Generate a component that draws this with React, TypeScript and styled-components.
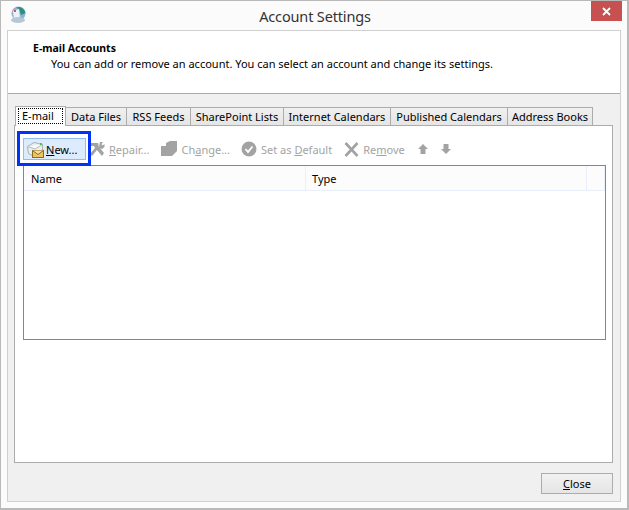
import React from "react";
import styled, { createGlobalStyle } from "styled-components";

const Global = createGlobalStyle`
  html, body { margin: 0; padding: 0; background: #fff; }
  * { box-sizing: border-box; }
`;
const Window = styled.div`
  width: 629px; height: 510px; background: #fbfbfb; border: 1px solid #b9b9b9; border-bottom-width: 2px;
  border-right-width: 2px;
  padding: 0 6px 6px 6px; display: flex; flex-direction: column;
  font-family: "Noto Sans", "DejaVu Sans", sans-serif; font-size: 11px; color: #000; overflow: hidden;
`;
const TitleBar = styled.div`
  height: 29px; flex: none; display: flex; align-items: flex-start; position: relative; justify-content: center;
`;
const AppIcon = styled.svg`
  position: absolute; left: 3px; top: 5px; width: 16px; height: 18px;
`;
const Title = styled.div`
  font-size: 14.5px; color: #333; line-height: 30px; letter-spacing: -0.15px; margin-left: 2px;
`;
const CloseX = styled.div`
  position: absolute; right: -1px; top: 0; width: 31px; height: 20px; background: #c75050;
  display: flex; align-items: center; justify-content: center;
`;
const Frame = styled.div`
  flex: 1; border: 1px solid #d0d0d0; display: flex; flex-direction: column; background: #f0f0f0; min-height: 0;
`;
const Header = styled.div`
  height: 63px; flex: none; background: #fff; border-bottom: 1px solid #aaa; padding: 10px 0 0 25px; 
`;
const HeaderTitle = styled.div`
  font-weight: 700; font-size: 10.5px; line-height: 15px; color: #000;
`;
const HeaderText = styled.div`
  margin: 0 0 0 18px; line-height: 16px; letter-spacing: 0; white-space: nowrap;
`;
const Body = styled.div`
  flex: 1; display: flex; flex-direction: column; padding: 13px 8px 0 6px; min-height: 0;
`;
const TabRow = styled.div`
  display: flex; height: 19px; flex: none; padding-left: 1px; position: relative; z-index: 1;
`;
const Tab = styled.div<{ $active?: boolean; $w: number }>`
  width: ${p => p.$w}px; height: ${p => (p.$active ? "20px" : "19px")}; flex: none; 
  margin-right: 0; margin-top: ${p => (p.$active ? "-1px" : "0")};
  border: 1px solid #acacac; margin-left: ${p => (p.$active ? "0" : "-1px")}; border-bottom: ${p => (p.$active ? "none" : "1px solid #acacac")};
  background: ${p => (p.$active ? "#fff" : "linear-gradient(#f0f0f0, #e5e5e5)")};
  display: flex; align-items: center; justify-content: center; padding: ${p => (p.$active ? "1px 2px 2px" : "0")};
  white-space: nowrap; position: relative; z-index: ${p => (p.$active ? 2 : 1)};
`;
const Focus = styled.span`
  border: 1px dotted #000; display: flex; align-items: center; justify-content: flex-start;
  width: 100%; height: 100%; padding: 0 0 1px 3px;
`;
const Panel = styled.div`
  height: 338px; flex: none; background: #fff; border: 1px solid #acacac; margin-top: -1px; padding: 12px 6px 0 8px;
  width: 599px; position: relative;
`;
const Toolbar = styled.div`
  display: flex; height: 22px; align-items: center; position: relative;
`;
const ToolBtn = styled.div<{ $ml?: number; $hot?: boolean }>`
  display: flex; align-items: center; height: 22px; gap: 4px; margin-left: ${p => p.$ml ?? 0}px;
  color: ${p => (p.$hot ? "#000" : "#a3a3a3")}; white-space: nowrap;
  ${p => p.$hot && "width: 63px; padding-left: 3px; background: #dcecfc; border: 1px solid #8fbdee; gap: 2px;"}
`;
const Annotation = styled.div`
  position: absolute; left: 2px; top: 5px; width: 74px; height: 35px; border: 3px solid #0033f5; pointer-events: none; z-index: 3;
`;
const List = styled.div`
  width: 583px; height: 175px; margin-top: 5px; border: 1px solid #85858f; background: #fff;
`;
const ListHead = styled.div`
  height: 25px; background: #fcfcfc; border-bottom: 1px solid #e9f0fb; display: flex; 
`;
const Col = styled.div<{ $w?: number; $pl?: number }>`
  ${p => (p.$w ? `width: ${p.$w}px; flex: none;` : "flex: 1;")}
  border-right: 1px solid #e9f0fb; padding-left: ${p => p.$pl ?? 7}px; line-height: 26px;
`;
const Footer = styled.div`
  flex: 1; display: flex; justify-content: flex-end; align-items: flex-start; padding-top: 10px; margin-right: -1px;
`;
const CloseBtn = styled.div`
  width: 72px; height: 21px; border: 1px solid #acacac; background: linear-gradient(#f1f1f1, #e5e5e5);
  display: flex; align-items: center; justify-content: center; margin-right: 0;
`;
const U = styled.span` text-decoration: underline; `;

const NewIcon = () => (
  <svg width="17" height="17" viewBox="0 0 17 17" style={{ flex: "none" }}>
    <path d="M0.5 5.5 L7 1.5 L15.5 3.5 L15.5 9 L8 16 L1.5 12.5 Z" fill="#eceff2" stroke="#a9b0b7" />
    <path d="M0.5 5.5 L8 8 L15.5 3.5" fill="#f8f9fa" stroke="#b4bbc2" />
    <rect x="13" y="2" width="2" height="2" fill="#58c04c" />
    <rect x="5.5" y="9.5" width="11" height="7" fill="#eec45c" stroke="#8a6a2a" />
    <path d="M5.5 9.5 L11 13.5 L16.5 9.5" fill="#f8e09a" stroke="#8a6a2a" />
  </svg>
);
const RepairIcon = () => (
  <svg width="16" height="16" viewBox="0 0 16 16" style={{ flex: "none" }}>
    <path d="M1 2 H9 L10 6 L15 12 L13 15 L8 9 L3 15 L1 13 L6 7 L5 5 H1 Z" fill="#a3a3a3" />
    <path d="M11 1 L14 1 L12.5 3 L13.5 4.5 L15.5 3 L15.5 6 L13 8 L10 7 L10.5 3 Z" fill="#a3a3a3" />
  </svg>
);
const ChangeIcon = () => (
  <svg width="16" height="16" viewBox="0 0 16 16" style={{ flex: "none" }}>
    <path d="M0 5 H5 V2 L9 0 H16 V10 L11 15 H0 Z" fill="#a3a3a3" />
  </svg>
);
const DefaultIcon = () => (
  <svg width="16" height="16" viewBox="0 0 16 16" style={{ flex: "none" }}>
    <circle cx="8" cy="8" r="7.5" fill="#a3a3a3" />
    <path d="M4.5 8 L7 11 L11.5 5.5" fill="none" stroke="#fff" strokeWidth="1.8" />
  </svg>
);
const RemoveIcon = () => (
  <svg width="15" height="15" viewBox="0 0 15 15" style={{ flex: "none" }}>
    <path d="M1.5 1 L13.5 14 M13.5 1 L1.5 14" stroke="#a3a3a3" strokeWidth="2.6" />
  </svg>
);
const Arrow = ({ down, ml }: { down?: boolean; ml: number }) => (
  <svg width="10" height="10" viewBox="0 0 10 10" style={{ flex: "none", marginLeft: ml, transform: down ? "rotate(180deg)" : undefined }}>
    <path d="M5 0 L10 5 L7.5 5 L7.5 10 L2.5 10 L2.5 5 L0 5 Z" fill="#a3a3a3" />
  </svg>
);

export default function App() {
  return (
    <>
      <Global />
      <Window>
        <TitleBar>
          <AppIcon viewBox="0 0 16 18">
            <circle cx="8.5" cy="7.5" r="7" fill="#8fb2d6" />
            <path d="M6 1.5 A7 7 0 0 1 15.5 7 L11 9 L9 3 Z" fill="#2f8f7f" />
            <path d="M3 5 L9 3 L10 12 L4 13 Z" fill="#eef2f7" />
            <rect x="4" y="4" width="2" height="2" fill="#d9534f" />
            <ellipse cx="8" cy="14" rx="7" ry="3" fill="#b7c7da" />
          </AppIcon>
          <Title>Account Settings</Title>
          <CloseX>
            <svg width="9" height="9" viewBox="0 0 9 9"><path d="M1 1 L8 8 M8 1 L1 8" stroke="#fff" strokeWidth="1.8" /></svg>
          </CloseX>
        </TitleBar>
        <Frame>
          <Header>
            <HeaderTitle>E-mail Accounts</HeaderTitle>
            <HeaderText>You can add or remove an account. You can select an account and change its settings.</HeaderText>
          </Header>
          <Body>
            <TabRow>
              <Tab $active $w={51}><Focus>E-mail</Focus></Tab>
              <Tab $w={62}>Data Files</Tab>
              <Tab $w={65}>RSS Feeds</Tab>
              <Tab $w={94}>SharePoint Lists</Tab>
              <Tab $w={108}>Internet Calendars</Tab>
              <Tab $w={118}>Published Calendars</Tab>
              <Tab $w={86}>Address Books</Tab>
            </TabRow>
            <Panel>
              <Annotation />
              <Toolbar>
                <ToolBtn $hot><NewIcon /><span><U>N</U>ew...</span></ToolBtn>
                <ToolBtn $ml={3}><RepairIcon /><span><U>R</U>epair...</span></ToolBtn>
                <ToolBtn $ml={12}><ChangeIcon /><span>Ch<U>a</U>nge...</span></ToolBtn>
                <ToolBtn $ml={11}><DefaultIcon /><span>Set as <U>D</U>efault</span></ToolBtn>
                <ToolBtn $ml={12}><RemoveIcon /><span>Re<U>m</U>ove</span></ToolBtn>
                <Arrow ml={13} />
                <Arrow ml={13} down />
              </Toolbar>
              <List>
                <ListHead>
                  <Col $w={282}>Name</Col>
                  <Col $w={281} $pl={6}>Type</Col>
                  <Col />
                </ListHead>
              </List>
            </Panel>
            <Footer>
              <CloseBtn><span><U>C</U>lose</span></CloseBtn>
            </Footer>
          </Body>
        </Frame>
      </Window>
    </>
  );
}
